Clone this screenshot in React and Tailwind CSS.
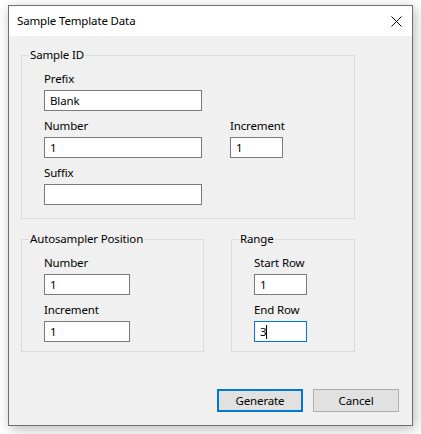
import React from "react";

function Field({ label, value, width, focused, caret }) {
  return (
    <div className="flex flex-col">
      <div className="h-[16px] leading-[16px] text-black">{label}</div>
      <div
        className={`mt-[3px] h-[21px] bg-white flex items-center pl-[5px] leading-[16px] text-black ${width} ${
          focused ? "border border-[#0078d7]" : "border border-[#7a7a7a]"
        }`}
      >
        <span>{value}</span>
        {caret ? <span className="inline-block w-[1px] h-[14px] bg-black" /> : null}
      </div>
    </div>
  );
}

function Group({ title, className, children, inner }) {
  return (
    <fieldset className={`m-0 p-0 border border-[#dcdcdc] ${className}`}>
      <legend className="ml-[7px] px-[1px] leading-[16px] text-black">{title}</legend>
      <div className={inner}>{children}</div>
    </fieldset>
  );
}

export default function App() {
  return (
    <div className="w-[421px] h-[434px] bg-white pt-[5px] pl-[8px] font-['Noto_Sans',sans-serif] text-[11.5px] tracking-[-0.15px]">
      <div className="w-[405px] h-[421px] border border-[#707070] bg-[#f0f0f0] shadow-[2px_3px_12px_rgba(0,0,0,0.28)] flex flex-col">
        <div className="h-[30px] bg-white flex items-center justify-between pl-[8px] pr-[10px]">
          <span className="text-black leading-[16px]">Sample Template Data</span>
          <svg width="11" height="11" viewBox="0 0 11 11" className="block">
            <path d="M0.5 0.5 L10.5 10.5 M10.5 0.5 L0.5 10.5" stroke="#000" strokeWidth="1" fill="none" />
          </svg>
        </div>
        <div className="px-[12px] pt-[11px] flex flex-col">
          <Group title="Sample ID" className="w-[334px]" inner="pl-[22px] pt-[8px] pb-[13px]">
            <div className="grid grid-cols-[158px_53px] gap-x-[28px] gap-y-[7px]">
              <Field label="Prefix" value="Blank" width="w-[158px]" />
              <div />
              <Field label="Number" value="1" width="w-[158px]" />
              <Field label="Increment" value="1" width="w-[53px]" />
              <Field label="Suffix" value="" width="w-[158px]" />
            </div>
          </Group>
          <div className="mt-[12px] flex gap-[27px]">
            <Group title="Autosampler Position" className="w-[183px]" inner="pl-[22px] pt-[8px] pb-[9px] flex flex-col gap-[7px]">
              <Field label="Number" value="1" width="w-[86px]" />
              <Field label="Increment" value="1" width="w-[86px]" />
            </Group>
            <Group title="Range" className="w-[124px]" inner="pl-[22px] pt-[8px] pb-[9px] flex flex-col gap-[7px]">
              <Field label="Start Row" value="1" width="w-[53px]" />
              <Field label="End Row" value="3" width="w-[53px]" focused caret />
            </Group>
          </div>
          <div className="mt-[37px] flex justify-end gap-[10px] pr-[1px]">
            <button className="w-[86px] h-[23px] border-2 border-[#0078d7] bg-[#e1e1e1] text-black leading-[16px]">
              Generate
            </button>
            <button className="w-[86px] h-[23px] border border-[#adadad] bg-[#e1e1e1] text-black leading-[16px]">
              Cancel
            </button>
          </div>
        </div>
      </div>
    </div>
  );
}
